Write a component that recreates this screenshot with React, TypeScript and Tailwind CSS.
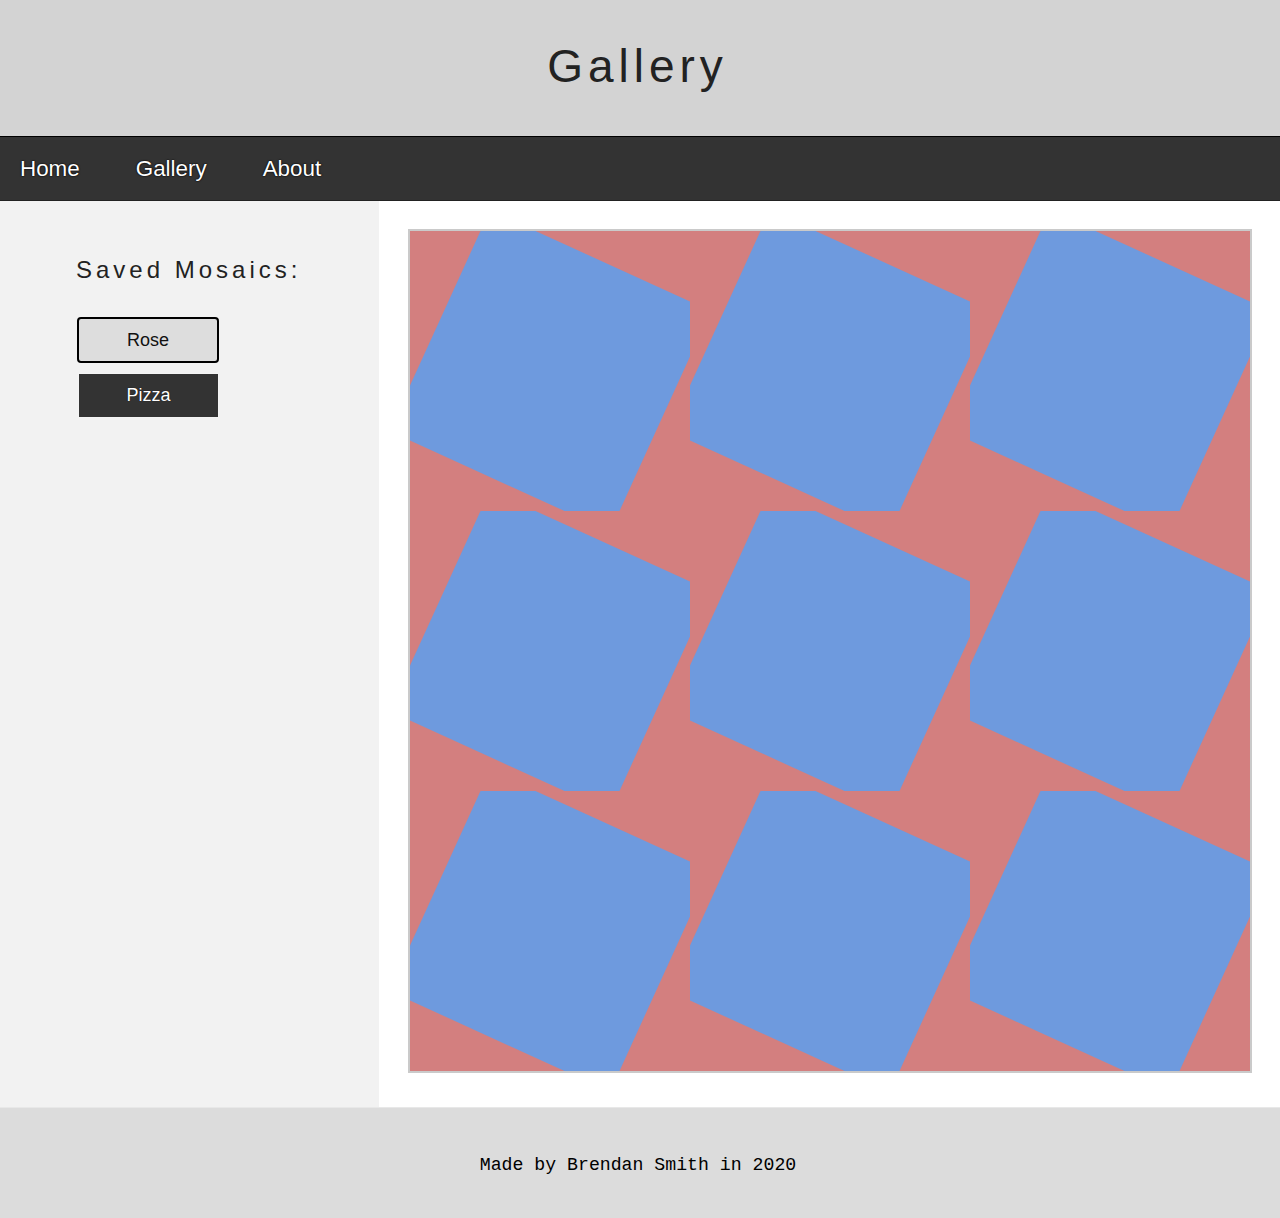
import React from "react";

const TILE = 280;
const PTS: [number, number][] = [
  [70.5, 0],
  [125.5, 0],
  [280, 70.5],
  [280, 125.5],
  [209.5, 280],
  [154.5, 280],
  [0, 209.5],
  [0, 154.5],
];

function Mosaic() {
  const tiles: React.ReactNode[] = [];
  for (let r = 0; r < 3; r++) {
    for (let c = 0; c < 3; c++) {
      const pts = PTS.map(([x, y]) => `${x + c * TILE},${y + r * TILE}`).join(" ");
      tiles.push(<polygon key={`${r}-${c}`} points={pts} fill="#6e9ade" />);
    }
  }
  return (
    <svg width={840} height={840} viewBox="0 0 840 840" className="block">
      <rect x={0} y={0} width={840} height={840} fill="#d37f7f" />
      {tiles}
    </svg>
  );
}

export default function App() {
  return (
    <div className="w-[1280px] min-h-[1218px] flex flex-col" style={{ fontFamily: '"Liberation Sans", Arial, sans-serif' }}>
      <header className="h-[136px] bg-[#d3d3d3] flex items-center justify-center">
        <h1 className="text-[46px] leading-none tracking-[5px] text-[#222] pr-[5px] pb-[5px]">Gallery</h1>
      </header>
      <nav className="h-[65px] bg-[#333] border-t border-t-black border-b border-b-[#222] flex items-center pl-[20px] gap-[56px]">
        {["Home", "Gallery", "About"].map((t) => (
          <a key={t} className="text-white text-[22.4px] leading-none pt-[2px] [text-shadow:0_0_2px_#000,0_0_1px_#000] cursor-pointer">
            {t}
          </a>
        ))}
      </nav>
      <main className="flex">
        <aside className="w-[379px] bg-[#f2f2f2] pl-[76px] pt-[55px]">
          <h2 className="text-[24px] leading-[28px] tracking-[4px] text-[#222]">Saved Mosaics:</h2>
          <div className="flex flex-col items-start mt-[33px]">
            <button className="w-[142px] h-[46px] ml-[1px] bg-[#ddd] border-2 border-black rounded-[4px] text-[18px] text-[#111] flex items-center justify-center">
              Rose
            </button>
            <button className="w-[141px] h-[45px] ml-[2px] mt-[10px] bg-[#333] border border-[#f4f4f4] text-[18px] text-white flex items-center justify-center [text-shadow:0_0_1px_#000]">
              Pizza
            </button>
          </div>
        </aside>
        <section className="flex-1 bg-white flex justify-center pt-[28px] pb-[34px]">
          <div className="border-2 border-[#cacaca] ml-[1px]">
            <Mosaic />
          </div>
        </section>
      </main>
      <footer className="h-[111px] bg-[#dcdcdc] border-t border-t-[#e8e8e8] flex items-center justify-center">
        <p className="text-[18.2px] text-black pr-[4px] pt-[5px]" style={{ fontFamily: '"Liberation Mono", "Courier New", monospace' }}>
          Made by Brendan Smith in 2020
        </p>
      </footer>
    </div>
  );
}
